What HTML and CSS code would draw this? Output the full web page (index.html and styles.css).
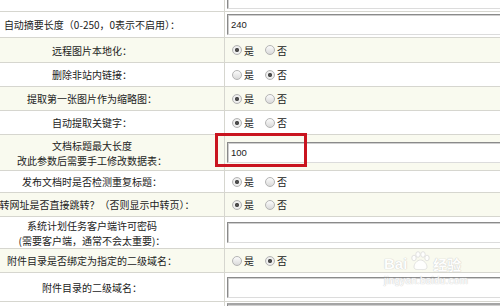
FILE: index.html
```html
<!DOCTYPE html>
<html lang="zh-CN">
<head>
  <meta charset="UTF-8">
  <title>系统基本参数</title>
  <link rel="stylesheet" href="styles.css">
</head>
<body>
  <div class="crop">
    <div class="cfg">
      <div class="row r26">
        <div class="label"></div>
        <div class="val"><input class="txt" type="text" value=""></div>
      </div>
      <div class="row r26">
        <div class="label">自动摘要长度（0-250，0表示不启用）：</div>
        <div class="val"><input class="txt" type="text" value="240"></div>
      </div>
      <div class="row r25 alt">
        <div class="label">远程图片本地化：</div>
        <div class="val opts">
          <label><input type="radio" name="r1" checked>是</label>
          <label><input type="radio" name="r1">否</label>
        </div>
      </div>
      <div class="row">
        <div class="label">删除非站内链接：</div>
        <div class="val opts">
          <label><input type="radio" name="r2">是</label>
          <label><input type="radio" name="r2" checked>否</label>
        </div>
      </div>
      <div class="row alt">
        <div class="label">提取第一张图片作为缩略图：</div>
        <div class="val opts">
          <label><input type="radio" name="r3" checked>是</label>
          <label><input type="radio" name="r3">否</label>
        </div>
      </div>
      <div class="row">
        <div class="label">自动提取关键字：</div>
        <div class="val opts">
          <label><input type="radio" name="r4" checked>是</label>
          <label><input type="radio" name="r4">否</label>
        </div>
      </div>
      <div class="row r36 alt">
        <div class="label">文档标题最大长度<br>改此参数后需要手工修改数据表：</div>
        <div class="val">
          <input class="txt" type="text" value="100">
          <span class="mark"></span>
        </div>
      </div>
      <div class="row r22">
        <div class="label">发布文档时是否检测重复标题：</div>
        <div class="val opts">
          <label><input type="radio" name="r5" checked>是</label>
          <label><input type="radio" name="r5">否</label>
        </div>
      </div>
      <div class="row alt">
        <div class="label">跳转网址是否直接跳转？（否则显示中转页）：</div>
        <div class="val opts">
          <label><input type="radio" name="r6" checked>是</label>
          <label><input type="radio" name="r6">否</label>
        </div>
      </div>
      <div class="row r32">
        <div class="label">系统计划任务客户端许可密码<br>(需要客户端，通常不会太重要)：</div>
        <div class="val"><input class="txt" type="text" value=""></div>
      </div>
      <div class="row alt">
        <div class="label">附件目录是否绑定为指定的二级域名：</div>
        <div class="val opts">
          <label><input type="radio" name="r7">是</label>
          <label><input type="radio" name="r7" checked>否</label>
        </div>
      </div>
      <div class="row r29">
        <div class="label">附件目录的二级域名：</div>
        <div class="val"><input class="txt" type="text" value=""></div>
      </div>
      <div class="row last">
        <div class="label"></div>
        <div class="val"><input class="txt gray" type="text" value=""></div>
      </div>
    </div>

    <div class="watermark">
      <div class="wm-logo">
        <span>Bai</span>
        <svg width="22" height="20" viewBox="0 0 22 20">
          <g fill="#fff" stroke="#d8d8d8" stroke-width="0.8">
            <ellipse cx="5" cy="7" rx="2.2" ry="2.8"/>
            <ellipse cx="9" cy="3.5" rx="2.2" ry="2.8"/>
            <ellipse cx="14" cy="3.5" rx="2.2" ry="2.8"/>
            <ellipse cx="18" cy="7" rx="2.2" ry="2.8"/>
            <path d="M11.5 9 C8 9 5 13 5 16 C5 19 9 18.5 11.5 18.5 C14 18.5 18 19 18 16 C18 13 15 9 11.5 9 Z"/>
          </g>
        </svg>
        <span class="cn">经验</span>
      </div>
      <div class="wm-url">jingyan.baidu.com</div>
    </div>
  </div>
</body>
</html>
```

FILE: styles.css
```css
body { margin: 0; background: #fff; }

.crop {
  position: relative;
  width: 500px;
  height: 306px;
  overflow: hidden;
  background: #fff;
  font-family: "Noto Sans CJK SC", "Liberation Sans", sans-serif;
  font-size: 10px;
  color: #222;
}

.cfg { margin: -14px 0 0 -40px; width: 640px; }

/* one setting per row: label | value */
.row {
  display: grid;
  grid-template-columns: 265px 1fr;
  height: 24px;
  box-sizing: border-box;
  border-bottom: 1px solid #d6d6cf;
  background: #fff;
}
.row.alt { background: #f9faef; }
.r22 { height: 22px; }
.r25 { height: 25px; }
.r26 { height: 26px; }
.r29 { height: 29px; }
.r32 { height: 32px; }
.r36 { height: 36px; }
.row.last { height: 40px; border-bottom: 0; }

.label {
  display: flex;
  align-items: center;
  justify-content: center;
  text-align: center;
  line-height: 15px;
  white-space: nowrap;
  border-right: 1px solid #d6d6cf;
}

.val {
  position: relative;
  display: flex;
  align-items: center;
  padding-left: 2px;
}
.row.last .val { align-items: flex-start; padding-top: 1px; }

.txt {
  width: 320px;
  height: 21px;
  box-sizing: border-box;
  margin: 0;
  padding: 0 0 0 3px;
  border: 1px solid;
  border-color: #8a8a8a #dcdcdc #dcdcdc #8a8a8a;
  box-shadow: inset 1px 1px 0 #cfcfcf;
  background: #fff;
  font-family: "Liberation Sans", Arial, sans-serif;
  font-size: 9.5px;
  color: #222;
  outline: none;
}
.txt.gray { border-top: 2px solid #a5a5a5; background: #fff; }

.opts { padding-left: 7px; }
.opts label {
  display: flex;
  align-items: center;
  gap: 2px;
  margin-right: 11px;
}

.opts input[type="radio"] {
  appearance: none;
  -webkit-appearance: none;
  width: 10px;
  height: 10px;
  margin: 0;
  border: 1px solid #b4b4b4;
  border-radius: 50%;
  box-sizing: border-box;
  background: linear-gradient(#fbfbfb, #dadada);
}
.opts input[type="radio"]:checked {
  background: radial-gradient(circle, #4d4d4d 0 1.8px, #f2f2f2 2.4px, #dedede 100%);
}

/* red annotation box round the title length field */
.mark {
  position: absolute;
  left: -10px;
  top: -2px;
  width: 92px;
  height: 34px;
  box-sizing: border-box;
  border: 3px solid #c9141f;
}

.watermark {
  position: absolute;
  left: 384px;
  top: 251px;
  color: #fff;
  font-family: "Liberation Sans", Arial, sans-serif;
  text-shadow: 0 0 1px #c8c8c8, 0 0 1px #c8c8c8;
  opacity: 0.9;
}
.wm-logo {
  display: flex;
  align-items: flex-end;
  font-size: 15px;
  font-weight: bold;
  line-height: 16px;
}
.wm-logo svg { margin: 0 2px 1px 2px; }
.wm-logo .cn { font-family: "Noto Sans CJK SC", sans-serif; font-size: 14px; }
.wm-url { font-size: 10px; margin-top: 3px; letter-spacing: 0.2px; }
```
